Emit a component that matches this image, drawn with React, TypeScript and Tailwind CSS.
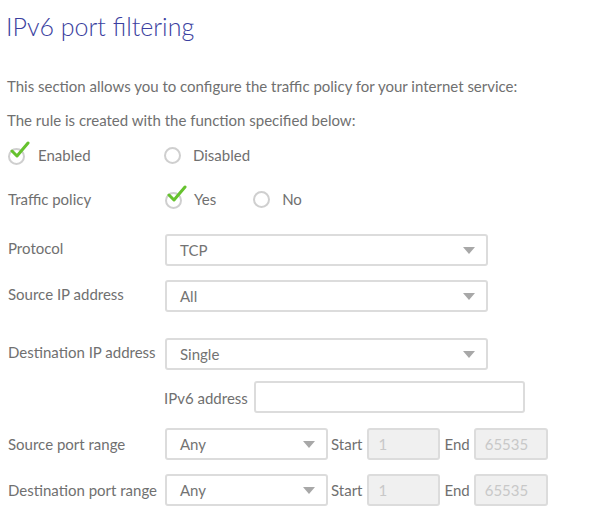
import React from "react";

const Check = () => (
  <span className="relative inline-block w-[20px] h-[20px] shrink-0">
    <span className="absolute left-0 top-[3px] w-[17px] h-[17px] rounded-full border-2 border-[#cfcfcf]" />
    <svg className="absolute left-[1px] top-[-4px]" width="22" height="20" viewBox="0 0 22 20">
      <path d="M3 10 L8 15 L19 2" fill="none" stroke="#66c22e" strokeWidth="3" strokeLinecap="round" strokeLinejoin="round" />
    </svg>
  </span>
);

const Radio = () => (
  <span className="inline-block w-[17px] h-[17px] rounded-full border-2 border-[#cfcfcf] shrink-0" />
);

const Caret = () => (
  <svg width="12" height="7" viewBox="0 0 12 7" className="shrink-0">
    <path d="M0 0 L12 0 L6 7 Z" fill="#a8a8a8" />
  </svg>
);

const Select = ({ value, w }: { value: string; w: string }) => (
  <div className={`${w} h-[32px] border-2 border-[#dcdcdc] rounded-[3px] bg-white flex items-center justify-between pl-[13px] pr-[11px] text-[15px] text-[#737373]`}>
    <span>{value}</span>
    <Caret />
  </div>
);

const PortRow = ({ label }: { label: string }) => (
  <div className="flex items-center h-[32px]">
    <div className="w-[165px] pl-[8px] text-[15px] text-[#707070] whitespace-nowrap">{label}</div>
    <div className="w-[163px] h-[32px] border-2 border-[#dcdcdc] rounded-[3px] bg-white flex items-center justify-between pl-[13px] pr-[11px] text-[15px] text-[#737373]">
      <span>Any</span>
      <Caret />
    </div>
    <span className="ml-[3px] text-[15px] text-[#707070]">Start</span>
    <div className="ml-[5px] w-[73px] h-[32px] border-2 border-[#dcdcdc] rounded-[3px] bg-[#f0f0f0] flex items-center pl-[9px] text-[15px] text-[#c8c8c8]">1</div>
    <span className="ml-[4px] text-[15px] text-[#707070]">End</span>
    <div className="ml-[4px] w-[74px] h-[32px] border-2 border-[#dcdcdc] rounded-[3px] bg-[#f0f0f0] flex items-center pl-[9px] text-[15px] text-[#c8c8c8]">65535</div>
  </div>
);

export default function App() {
  return (
    <div className="w-[616px] h-[528px] bg-white overflow-hidden" style={{ fontFamily: "Lato, 'Noto Sans', sans-serif" }}>
      <div className="pt-[10px] pl-[6px] text-[25px] font-light text-[#3b3fa0] leading-[32px]">IPv6 port filtering</div>
      <div className="mt-[34px] pl-[7px] text-[15px] text-[#707070] leading-[20px]">This section allows you to configure the traffic policy for your internet service:</div>
      <div className="mt-[14px] pl-[7px] text-[15px] text-[#707070] leading-[20px]">The rule is created with the function specified below:</div>
      <div className="mt-[14px] flex items-center h-[22px] text-[15px] text-[#707070]">
        <div className="w-[157px] pl-[8px] flex items-center">
          <Check />
          <span className="ml-[10px]">Enabled</span>
        </div>
        <div className="flex items-center pl-[7px]">
          <Radio />
          <span className="ml-[12px]">Disabled</span>
        </div>
      </div>
      <div className="mt-[22px] flex items-center h-[22px] text-[15px] text-[#707070]">
        <div className="w-[157px] pl-[8px]">Traffic policy</div>
        <div className="flex items-center pl-[8px]">
          <Check />
          <span className="ml-[9px]">Yes</span>
        </div>
        <div className="flex items-center ml-[37px]">
          <Radio />
          <span className="ml-[12px]">No</span>
        </div>
      </div>
      <div className="mt-[24px] flex items-start h-[32px]">
        <div className="w-[165px] pl-[8px] pt-[3px] text-[15px] text-[#707070] whitespace-nowrap">Protocol</div>
        <Select value="TCP" w="w-[323px]" />
      </div>
      <div className="mt-[14px] flex items-start h-[32px]">
        <div className="w-[165px] pl-[8px] pt-[3px] text-[15px] text-[#707070] whitespace-nowrap">Source IP address</div>
        <Select value="All" w="w-[323px]" />
      </div>
      <div className="mt-[26px] flex items-start h-[32px]">
        <div className="w-[165px] pl-[8px] pt-[3px] text-[15px] text-[#707070] whitespace-nowrap">Destination IP address</div>
        <Select value="Single" w="w-[323px]" />
      </div>
      <div className="mt-[11px] flex items-center h-[32px] pl-[164px]">
        <span className="text-[15px] text-[#707070] pt-[2px]">IPv6 address</span>
        <div className="ml-[6px] w-[271px] h-[32px] border-2 border-[#dcdcdc] rounded-[3px] bg-white" />
      </div>
      <div className="mt-[15px]">
        <PortRow label="Source port range" />
      </div>
      <div className="mt-[14px]">
        <PortRow label="Destination port range" />
      </div>
    </div>
  );
}
